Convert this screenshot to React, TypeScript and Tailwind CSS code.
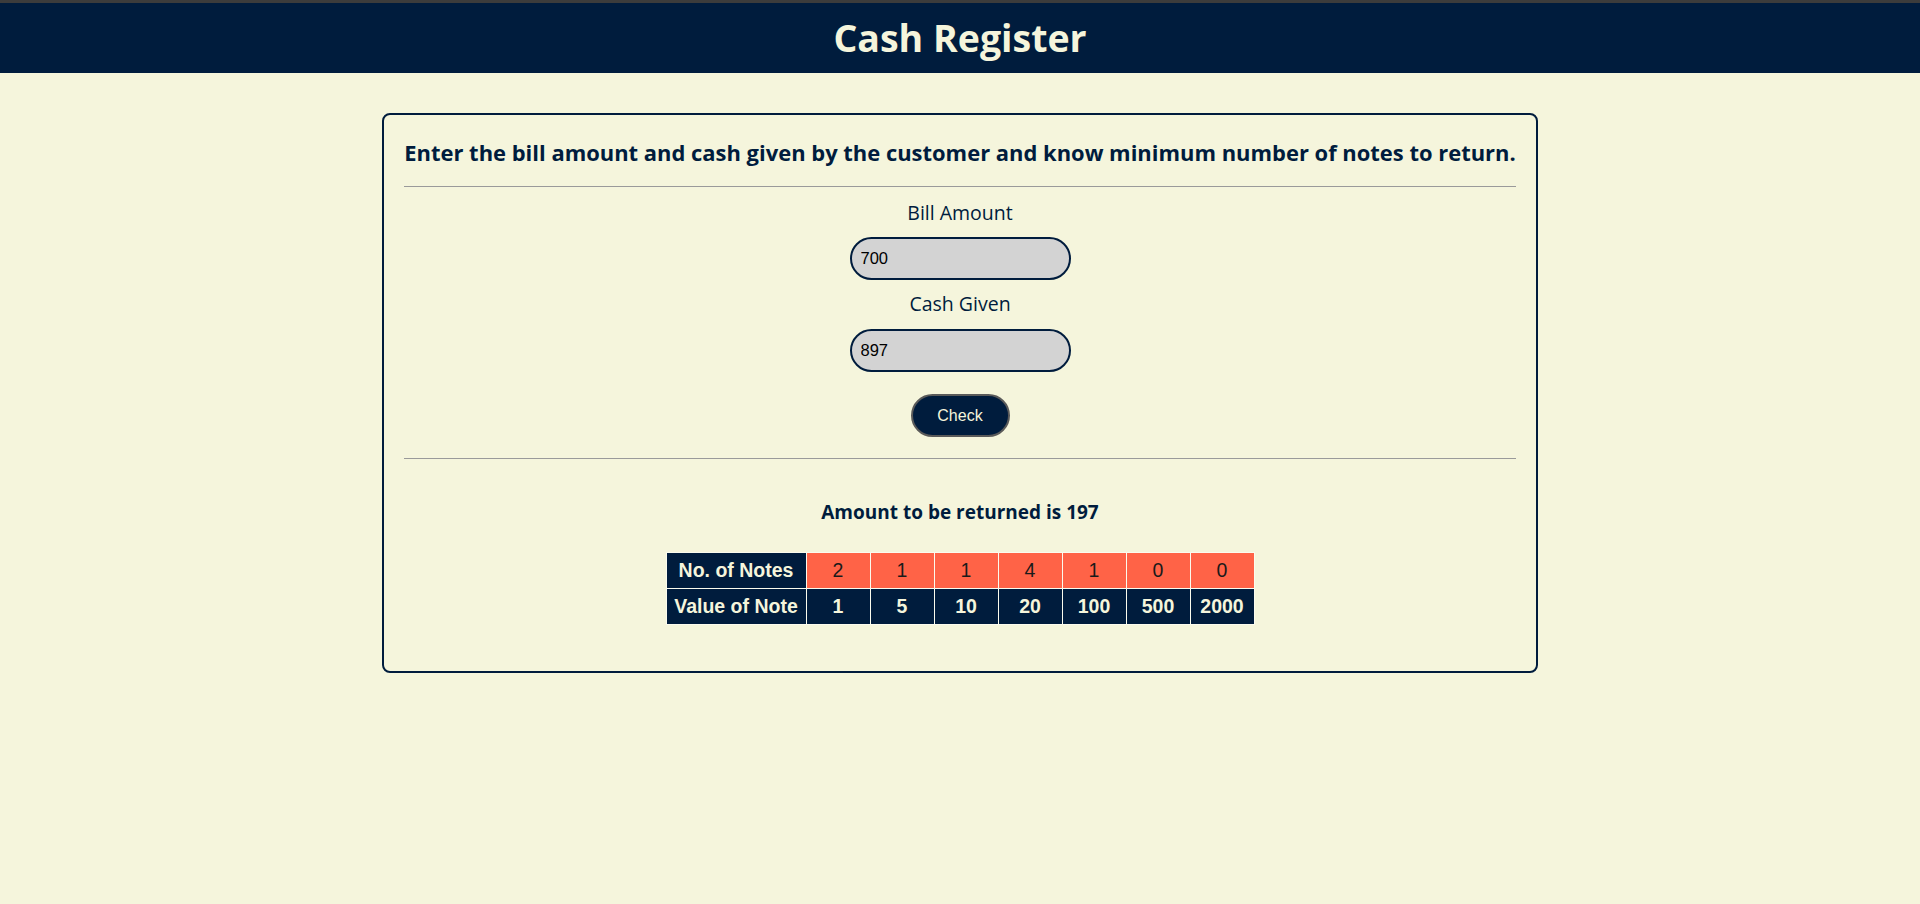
const notes = [
  { count: 2, value: 1 },
  { count: 1, value: 5 },
  { count: 1, value: 10 },
  { count: 4, value: 20 },
  { count: 1, value: 100 },
  { count: 0, value: 500 },
  { count: 0, value: 2000 },
];

const App = () => {
  return (
    <div className="min-h-[904px] bg-[#f5f5dc] text-[#001c3d] font-['Open_Sans',sans-serif]">
      <header className="border-t-[3px] border-[#3c3c3c] bg-[#001c3d] h-[73px] flex items-center justify-center">
        <h1 className="text-[37.5px] font-bold text-[#f5f5dc] leading-none">Cash Register</h1>
      </header>

      <main className="flex justify-center pt-[40px]">
        <div className="w-[1156px] border-2 border-[#001c3d] rounded-lg px-[20px] pt-[22px] pb-[46px] flex flex-col items-center">
          <h2 className="text-[21.95px] leading-[32px] font-bold whitespace-nowrap">
            Enter the bill amount and cash given by the customer and know minimum number of notes to return.
          </h2>
          <hr className="w-full border-t border-[#9a9a9a] mt-[17px] mb-[12px]" />

          <label className="text-[19.5px] leading-[28px]">Bill Amount</label>
          <input
            readOnly
            value="700"
            className="mt-[10px] w-[221px] h-[43px] border-2 border-[#001c3d] rounded-full bg-[#d3d3d3] px-[9px] text-[16.5px] text-black font-['Liberation_Sans',sans-serif] outline-none"
          />

          <label className="mt-[10px] text-[19.5px] leading-[28px]">Cash Given</label>
          <input
            readOnly
            value="897"
            className="mt-[11px] w-[221px] h-[43px] border-2 border-[#001c3d] rounded-full bg-[#d3d3d3] px-[9px] text-[16.5px] text-black font-['Liberation_Sans',sans-serif] outline-none"
          />

          <button className="mt-[22px] w-[99px] h-[43px] rounded-full bg-[#001c3d] border-2 border-[#5a5a5a] text-[#f5f5dc] text-[16px] font-['Liberation_Sans',sans-serif]">
            Check
          </button>

          <hr className="w-full border-t border-[#9a9a9a] mt-[21px]" />

          <p className="mt-[40px] text-[19px] leading-[26px] font-bold">Amount to be returned is 197</p>

          <table className="mt-[27px] border-separate border-spacing-[1px] bg-[#fbfbee] font-['Liberation_Sans',sans-serif] text-[19.5px]">
            <tbody>
              <tr>
                <th className="w-[139px] h-[35px] px-[6px] bg-[#001c3d] text-[#f5f5dc] font-bold">No. of Notes</th>
                {notes.map((n) => (
                  <td key={n.value} className="w-[63px] h-[35px] bg-[#ff6347] text-[#1a1a1a] text-center">
                    {n.count}
                  </td>
                ))}
              </tr>
              <tr>
                <th className="w-[139px] h-[35px] px-[6px] bg-[#001c3d] text-[#f5f5dc] font-bold">Value of Note</th>
                {notes.map((n) => (
                  <td key={n.value} className="w-[63px] h-[35px] bg-[#001c3d] text-[#f5f5dc] font-bold text-center">
                    {n.value}
                  </td>
                ))}
              </tr>
            </tbody>
          </table>
        </div>
      </main>
    </div>
  );
};

export default App;
